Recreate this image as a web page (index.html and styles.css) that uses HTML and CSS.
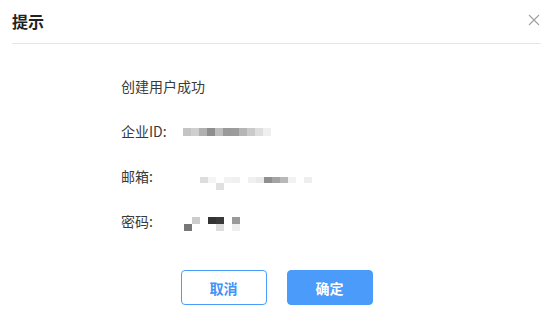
FILE: index.html
```html
<!DOCTYPE html>
<html lang="zh-CN">
<head>
<meta charset="utf-8">
<title>提示</title>
<link rel="stylesheet" href="styles.css">
</head>
<body>
<div class="dialog">
  <div class="dialog-header">
    <span class="dialog-title">提示</span>
    <button class="dialog-close" aria-label="关闭">
      <svg width="12" height="12" viewBox="0 0 12 12"><path d="M1 1L11 11M11 1L1 11" stroke="#a0a0a0" stroke-width="1.1" fill="none"/></svg>
    </button>
  </div>
  <div class="dialog-body">
    <div class="row">创建用户成功</div>
    <div class="row">
      <span class="label">企业ID:</span>
      <div class="mask mask-id">
        <i class="s-c4"></i><i class="s-cf"></i><i class="s-b0"></i><i class="s-8e"></i><i class="s-bd"></i><i class="s-99"></i><i class="s-9c"></i><i class="s-b5"></i><i class="s-ca"></i><i class="s-de"></i><i class="s-ef"></i>
      </div>
    </div>
    <div class="row">
      <span class="label">邮箱:</span>
      <div class="mask mask-mail">
        <i class="s-dd"></i><i class="s-f4"></i><i></i><i class="s-f2"></i><i class="s-f0"></i><i></i><i class="s-f0"></i><i class="s-ea"></i><i class="s-8f"></i><i class="s-a3"></i><i class="s-b8"></i><i class="s-f2"></i><i></i><i class="s-ee"></i>
        <i></i><i></i><i class="s-e0"></i><i></i><i></i><i></i><i></i><i></i><i></i><i></i><i></i><i></i><i></i><i></i>
      </div>
    </div>
    <div class="row">
      <span class="label">密码:</span>
      <div class="mask mask-pwd">
        <i></i><i class="s-cc"></i><i></i><i class="s-33"></i><i class="s-3a"></i><i></i><i class="s-99"></i>
        <i class="s-77"></i><i></i><i></i><i></i><i class="s-dd"></i><i></i><i class="s-ee"></i>
      </div>
    </div>
  </div>
  <div class="dialog-footer">
    <button class="btn btn-plain">取消</button>
    <button class="btn btn-primary">确定</button>
  </div>
</div>
</body>
</html>
```

FILE: styles.css
```css
* { box-sizing: border-box; }
html, body {
  margin: 0;
  background: #ffffff;
}
body {
  font-family: "Noto Sans CJK SC", "Noto Sans", sans-serif;
  color: #333333;
}
.dialog {
  width: 553px;
  height: 328px;
  padding: 0 12px;
}
.dialog-header {
  height: 44px;
  display: flex;
  align-items: center;
  justify-content: space-between;
  border-bottom: 1px solid #e6e6e6;
}
.dialog-title {
  font-size: 16px;
  font-weight: 700;
  color: #222222;
  line-height: 20px;
  margin-top: -2px;
}
.dialog-close {
  border: 0;
  background: transparent;
  padding: 0;
  width: 12px;
  height: 12px;
  margin-right: 1px;
  margin-top: -4px;
  display: flex;
}
.dialog-body {
  padding: 32px 0 0 109px;
  display: flex;
  flex-direction: column;
  gap: 25px;
}
.row {
  height: 20px;
  line-height: 20px;
  font-size: 14px;
  display: flex;
  align-items: flex-start;
  color: #3a3a3a;
}
.label {
  width: 62px;
  flex: none;
}
.mask {
  display: grid;
}
.mask i {
  display: block;
  filter: blur(0.6px);
}
.mask-id {
  grid-template-columns: repeat(11, 8px);
  grid-template-rows: 8px;
  margin-top: 7px;
}
.mask-mail {
  grid-template-columns: repeat(14, 8px);
  grid-template-rows: 6px 7px;
  margin-top: 11px;
  margin-left: 17px;
}
.mask-pwd {
  grid-template-columns: repeat(7, 8px);
  grid-template-rows: 7px 7px;
  margin-top: 6px;
  margin-left: 1px;
}
.s-33 { background: #333333; }
.s-3a { background: #3a3a3a; }
.s-77 { background: #777777; }
.s-8e { background: #8e8e8e; }
.s-8f { background: #8f8f8f; }
.s-99 { background: #999999; }
.s-9c { background: #9c9c9c; }
.s-a3 { background: #a3a3a3; }
.s-b0 { background: #b0b0b0; }
.s-b5 { background: #b5b5b5; }
.s-b8 { background: #b8b8b8; }
.s-bd { background: #bdbdbd; }
.s-c4 { background: #c4c4c4; }
.s-ca { background: #cacaca; }
.s-cc { background: #cccccc; }
.s-cf { background: #cfcfcf; }
.s-dd { background: #dddddd; }
.s-de { background: #dedede; }
.s-e0 { background: #e0e0e0; }
.s-ea { background: #eaeaea; }
.s-ee { background: #eeeeee; }
.s-ef { background: #efefef; }
.s-f0 { background: #f0f0f0; }
.s-f2 { background: #f2f2f2; }
.s-f4 { background: #f4f4f4; }
.dialog-footer {
  display: flex;
  justify-content: center;
  gap: 20px;
  margin-top: 39px;
}
.btn {
  width: 86px;
  height: 35px;
  border-radius: 4px;
  font-family: "Noto Sans CJK SC", "Noto Sans", sans-serif;
  font-size: 14px;
  font-weight: 700;
  padding: 0;
  cursor: pointer;
}
.btn-plain {
  background: #ffffff;
  border: 1px solid #4a9cfb;
  color: #3f95f7;
}
.btn-primary {
  background: #4a9bfa;
  border: 1px solid #4a9bfa;
  color: #ffffff;
}
```
